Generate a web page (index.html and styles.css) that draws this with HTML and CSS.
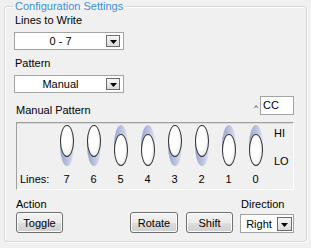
FILE: index.html
```html
<!DOCTYPE html>
<html lang="en">
<head>
    <meta charset="UTF-8">
    <title>Configuration Settings</title>
    <link rel="stylesheet" href="styles.css">
</head>
<body>
    <fieldset class="config">
        <legend class="configTitle">Configuration Settings</legend>

        <div class="fieldLabel firstLabel">Lines to Write</div>
        <div class="combo comboWide">
            <span class="comboValue">0 - 7</span>
            <span class="comboArrow"><svg width="7" height="4" viewBox="0 0 7 4"><path d="M0 0H7L3.5 4Z" fill="#000"/></svg></span>
        </div>

        <div class="fieldLabel spacedLabel">Pattern</div>
        <div class="combo comboWide">
            <span class="comboValue">Manual</span>
            <span class="comboArrow"><svg width="7" height="4" viewBox="0 0 7 4"><path d="M0 0H7L3.5 4Z" fill="#000"/></svg></span>
        </div>

        <div class="patternHead">
            <div class="fieldLabel patternLabel">Manual Pattern</div>
            <div class="hex">
                <span class="caret">^</span>
                <div class="hexBox">CC</div>
            </div>
        </div>

        <div class="panel">
            <div></div>
            <div class="switch"><div class="knob"></div></div>
            <div class="switch"><div class="knob"></div></div>
            <div class="switch on"><div class="knob"></div></div>
            <div class="switch on"><div class="knob"></div></div>
            <div class="switch"><div class="knob"></div></div>
            <div class="switch"><div class="knob"></div></div>
            <div class="switch on"><div class="knob"></div></div>
            <div class="switch on"><div class="knob"></div></div>
            <div class="hiLo">
                <span>HI</span>
                <span>LO</span>
            </div>

            <div class="linesLabel">Lines:</div>
            <div class="lineNum">7</div>
            <div class="lineNum">6</div>
            <div class="lineNum">5</div>
            <div class="lineNum">4</div>
            <div class="lineNum">3</div>
            <div class="lineNum">2</div>
            <div class="lineNum">1</div>
            <div class="lineNum">0</div>
        </div>

        <div class="actions">
            <div class="actionGroup">
                <div class="fieldLabel">Action</div>
                <button class="btn btnToggle">Toggle</button>
            </div>
            <button class="btn btnRotate">Rotate</button>
            <button class="btn btnShift">Shift</button>
            <div class="directionGroup">
                <div class="fieldLabel directionLabel">Direction</div>
                <div class="combo comboSmall">
                    <span class="comboValue">Right</span>
                    <span class="comboArrow"><svg width="7" height="4" viewBox="0 0 7 4"><path d="M0 0H7L3.5 4Z" fill="#000"/></svg></span>
                </div>
            </div>
        </div>
    </fieldset>
</body>
</html>
```

FILE: styles.css
```css
body {
    font-family: 'Liberation Sans', Arial, sans-serif;
    font-size: 11px;
    color: #000;
    margin: 0;
    padding: 0;
    background-color: #f0f0f0;
    width: 311px;
    height: 248px;
    overflow: hidden;
}

.config {
    margin: 0 4px;
    padding: 0 12px 8px 10px;
    border: 1px solid #d3d7da;
    border-radius: 3px;
    box-shadow: inset 1px 1px 0 #fff, 1px 1px 0 #fff;
    min-width: 0;
}

.configTitle {
    color: #3b8fd9;
    line-height: 12px;
    padding: 0 2px;
    margin-left: -2px;
}

.fieldLabel {
    line-height: 13px;
}

.firstLabel {
    margin-top: 2px;
}

.spacedLabel {
    margin-top: 7px;
}

/* combo boxes */
.combo {
    display: flex;
    align-items: center;
    background-color: #fff;
    border: 1px solid #a3a3a3;
    box-sizing: border-box;
}

.comboWide {
    width: 110px;
    height: 18px;
    margin-top: 5px;
    margin-left: -1px;
}

.comboSmall {
    width: 54px;
    height: 19px;
    margin-top: 3px;
}

.comboValue {
    flex: 1;
    text-align: center;
}

.comboArrow {
    width: 14px;
    height: 12px;
    box-sizing: border-box;
    margin-right: 3px;
    border: 1px solid #6d6d6d;
    background: linear-gradient(#f7f7f7, #d9d9d9);
    display: flex;
    align-items: center;
    justify-content: center;
    padding-top: 2px;
}

.comboSmall .comboArrow {
    width: 15px;
    height: 14px;
    margin-right: 1px;
}

/* manual pattern header */
.patternHead {
    display: flex;
    justify-content: space-between;
    align-items: flex-start;
    margin-top: 3px;
}

.patternLabel {
    margin-top: 8px;
    margin-left: 1px;
}

.hex {
    display: flex;
    align-items: flex-start;
}

.caret {
    font-size: 8px;
    line-height: 8px;
    margin-top: 8px;
    margin-right: 2px;
}

.hexBox {
    width: 34px;
    height: 19px;
    box-sizing: border-box;
    background-color: #fff;
    border: 1px solid #a3a3a3;
    line-height: 17px;
    padding-left: 2px;
}

/* switch panel */
.panel {
    display: grid;
    grid-template-columns: 36px repeat(8, 27px) 1fr;
    grid-template-rows: 41px 13px;
    row-gap: 7px;
    margin-top: 5px;
    margin-left: 1px;
    padding: 2px 0 3px 0;
    border: 1px solid;
    border-color: #a0a0a0 #fff #fff #a0a0a0;
    box-shadow: inset 0 1px 0 #d8d8d8;
}

.switch {
    justify-self: center;
    width: 14px;
    height: 41px;
    border-radius: 50%;
    background: linear-gradient(90deg, #98a4cf, #bcc4e2 55%, #dde1f0);
    display: flex;
    flex-direction: column;
    justify-content: flex-start;
}

.switch.on {
    justify-content: flex-end;
}

.knob {
    width: 14px;
    height: 32px;
    box-sizing: border-box;
    border-radius: 50%;
    border: 1px solid #2f2f2f;
    background: radial-gradient(ellipse at 40% 40%, #fff 45%, #eeeeee 70%, #c8c8c8 100%);
}

.hiLo {
    display: flex;
    flex-direction: column;
    gap: 15px;
    padding: 2px 0 0 5px;
    line-height: 13px;
}

.linesLabel {
    padding-left: 3px;
    line-height: 13px;
}

.lineNum {
    text-align: center;
    line-height: 13px;
}

/* bottom actions */
.actions {
    display: flex;
    align-items: flex-end;
    margin-top: 8px;
}

.actionGroup .fieldLabel {
    margin-left: 1px;
}

.btn {
    font-family: inherit;
    font-size: 11px;
    height: 21px;
    padding: 0;
    border: 1px solid #707070;
    border-radius: 3px;
    background: linear-gradient(#f2f2f2 0%, #ebebeb 50%, #dddddd 51%, #cfcfcf 100%);
    box-shadow: inset 0 0 0 1px #fcfcfc;
    color: #000;
}

.btnToggle {
    width: 47px;
    margin-top: 1px;
    margin-left: 1px;
}

.btnRotate {
    width: 48px;
    margin-left: auto;
}

.btnShift {
    width: 47px;
    margin-left: 8px;
}

.directionGroup {
    margin-left: 7px;
}

.directionLabel {
    padding-left: 1px;
}
```
